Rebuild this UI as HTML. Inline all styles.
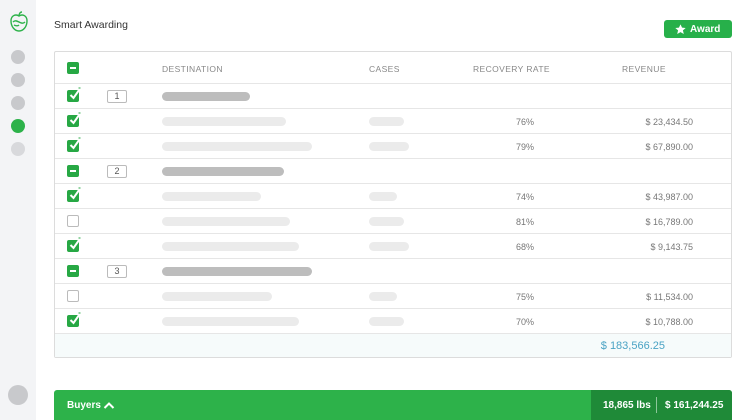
<!DOCTYPE html><html><head><style>
*{margin:0;padding:0;box-sizing:border-box}
body{width:750px;height:420px;background:#fff;font-family:"Liberation Sans",sans-serif;position:relative;overflow:hidden}
.a{position:absolute}
.side{left:0;top:0;width:36px;height:420px;background:#f3f4f6}
.dot{left:11px;width:14px;height:14px;border-radius:50%;background:#c8c9cc}
.box{left:54px;top:51px;width:678px;height:307px;border:1px solid #dcdcdc;border-radius:2px}
.line{left:55px;width:676px;height:1px;background:#e6e6e6}
.cb{left:67px;width:12px;height:12px;border-radius:2px;background:#27a844}
.cb.u{background:#fff;border:1px solid #bbb}
.cb.m::after{content:"";position:absolute;left:3px;top:5px;width:6px;height:2px;background:#fff}
.cb svg{position:absolute;left:1px;top:-3px}
.bd{left:107px;width:20px;height:13px;border:1px solid #bbb;border-radius:2px;font-size:9px;color:#555;text-align:center;line-height:11px}
.bar{height:9px;border-radius:5px;background:#ebebeb}
.bar.d{background:#bdbdbd}
.t{font-size:9px;color:#777}
.h{font-size:8.5px;color:#888;letter-spacing:.4px;top:64px}
</style></head><body>
<div class="a side"></div>
<svg class="a" style="left:9px;top:11px" width="20" height="22" viewBox="0 0 20 22" fill="none" stroke="#2db24a" stroke-width="1.4"><path d="M10 5C7 3 2 4 2 10c0 6 4 10 8 10s8-4 8-10c0-6-5-7-8-5z"/><path d="M10 5C10 3 11 1 13 1"/><path d="M4 11c2-2 4-1 6 0s4 2 6 0"/><path d="M5 14c2 1 4 1 5 0"/></svg>
<div class="a dot" style="top:50px"></div><div class="a dot" style="top:73px"></div><div class="a dot" style="top:96px"></div><div class="a dot" style="top:119px;background:#2db24a"></div><div class="a dot" style="top:142px;background:#d8d9dc"></div>
<div class="a dot" style="left:8px;top:385px;width:20px;height:20px"></div>
<div class="a" style="left:54px;top:19px;font-size:10.5px;color:#333">Smart Awarding</div>
<div class="a" style="left:664px;top:20px;width:68px;height:18px;background:#27b04a;border-radius:3px;color:#fff;font-size:10px;font-weight:bold;line-height:19px;padding-left:26px">Award<svg class="a" style="left:11px;top:4px" width="11" height="11" viewBox="0 0 10 10"><path d="M5 0.3l1.4 3 3.3.3-2.5 2.2.8 3.3L5 7.4 2 9.1l.8-3.3L.3 3.6l3.3-.3z" fill="#fff"/></svg></div>
<div class="a box"></div>
<div class="a cb m" style="top:62px"></div>
<div class="a h" style="left:162px">DESTINATION</div><div class="a h" style="left:369px">CASES</div><div class="a h" style="left:473px">RECOVERY RATE</div><div class="a h" style="left:622px">REVENUE</div>
<div id="rows"></div>
<div class="a" style="left:55px;top:334px;width:676px;height:23px;background:#f6fbfb"></div>
<div class="a line" style="top:333px"></div>
<div class="a" style="left:560px;top:340px;width:105px;text-align:right;font-size:11px;color:#4aa3c4">$ 183,566.25</div>
<div class="a" style="left:54px;top:390px;width:678px;height:30px;background:#2db24a;border-radius:3px 3px 0 0"></div>
<div class="a" style="left:591px;top:390px;width:141px;height:30px;background:#1f8a38;border-radius:0 3px 0 0"></div>
<div class="a" style="left:67px;top:400px;font-size:10px;font-weight:bold;color:#fff">Buyers</div>
<svg class="a" style="left:103px;top:401px" width="12" height="8" viewBox="0 0 12 8"><path d="M1.5 7L6 2.5 10.5 7" stroke="#fff" stroke-width="2" fill="none"/></svg>
<div class="a" style="left:603px;top:400px;font-size:10px;font-weight:bold;color:#fff">18,865 lbs</div>
<div class="a" style="left:656px;top:397px;width:1px;height:16px;background:#8cc79a"></div>
<div class="a" style="left:665px;top:400px;font-size:10px;font-weight:bold;color:#fff">$ 161,244.25</div>
<script>
var R=[["c",1,250],["c",0,286,404,"76%","23,434.50"],["c",0,312,409,"79%","67,890.00"],["m",2,284],["c",0,261,397,"74%","43,987.00"],["u",0,290,404,"81%","16,789.00"],["c",0,299,409,"68%","9,143.75"],["m",3,312],["u",0,272,397,"75%","11,534.00"],["c",0,299,404,"70%","10,788.00"]];
var h="";R.forEach(function(r,i){var y=84+i*25;h+='<div class="a line" style="top:'+(y-1)+'px"></div>';
var cls=r[0]=="m"?"cb m":(r[0]=="u"?"cb u":"cb");
h+='<div class="a '+cls+'" style="top:'+(y+6)+'px">'+(r[0]=="c"?'<svg width="15" height="15" viewBox="0 0 15 15"><path d="M2.5 8l3 3 7-10" stroke="#fff" stroke-width="2" fill="none"/><path d="M10.5 1l2 0" stroke="#27a844" stroke-width="1"/></svg>':'')+'</div>';
if(r[1]){h+='<div class="a bd" style="top:'+(y+6)+'px">'+r[1]+'</div><div class="a bar d" style="left:162px;width:'+(r[2]-162)+'px;top:'+(y+8)+'px"></div>';}
else{h+='<div class="a bar" style="left:162px;width:'+(r[2]-162)+'px;top:'+(y+8)+'px"></div><div class="a bar" style="left:369px;width:'+(r[3]-369)+'px;top:'+(y+8)+'px"></div><div class="a t" style="left:505px;width:40px;text-align:center;top:'+(y+8)+'px">'+r[4]+'</div><div class="a t" style="left:593px;width:100px;text-align:right;top:'+(y+8)+'px">$ '+r[5]+'</div>';}
});
document.getElementById("rows").innerHTML=h;
</script>
</body></html>
